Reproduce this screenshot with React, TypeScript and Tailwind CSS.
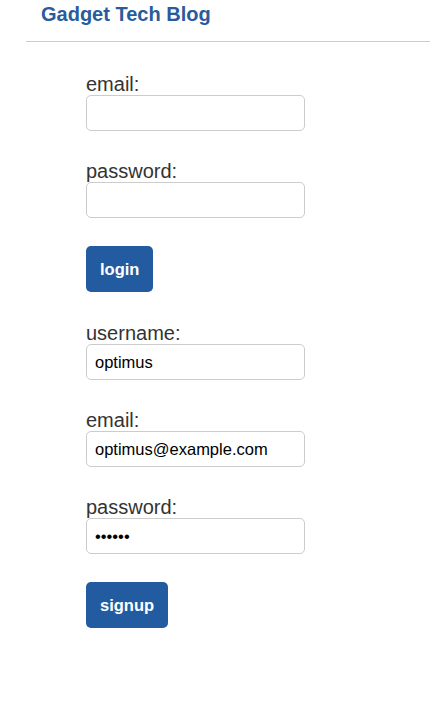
import React from "react";

const font = { fontFamily: '"Liberation Sans", Arial, sans-serif' };

function Field({ label, type = "text", value = "" }: { label: string; type?: string; value?: string }) {
  return (
    <div className="flex flex-col mb-[29px]">
      <label className="block text-[20px] leading-[22px] h-[22px] text-[#333333]">{label}</label>
      <input
        type={type}
        defaultValue={value}
        className="block w-[219px] h-[36px] border border-[#cccccc] rounded-[5px] px-[8px] text-[16.5px] text-black bg-white outline-none"
        style={font}
      />
    </div>
  );
}

export default function App() {
  return (
    <div className="min-h-[702px] w-[430px] bg-white" style={font}>
      <div className="ml-[26px] h-[42px] border-b border-[#cccccc]">
        <h1 className="pl-[15px] pt-[3px] text-[20px] leading-[23px] font-bold text-[#2a5b9b]">Gadget Tech Blog</h1>
      </div>
      <div className="pl-[86px] pt-[31px]">
        <Field label="email:" />
        <Field label="password:" />
        <button className="block -mt-[1px] bg-[#235ba1] text-white font-bold text-[16.5px] leading-[18px] px-[14px] h-[46px] rounded-[5px]">
          login
        </button>
        <div className="h-[30px]" />
        <Field label="username:" value="optimus" />
        <Field label="email:" value="optimus@example.com" />
        <Field label="password:" type="password" value="secret" />
        <button className="block -mt-[1px] bg-[#235ba1] text-white font-bold text-[16.5px] leading-[18px] px-[14px] h-[46px] rounded-[5px]">
          signup
        </button>
      </div>
    </div>
  );
}
